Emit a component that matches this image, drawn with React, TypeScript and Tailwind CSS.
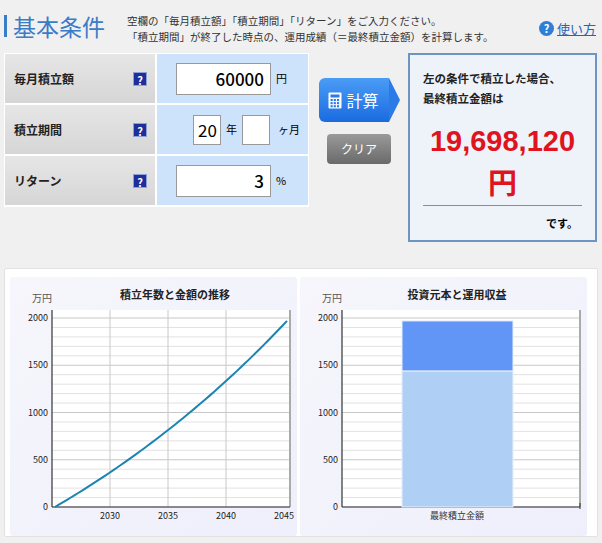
import React from 'react';

const font = { fontFamily: '"Noto Sans CJK JP", "Noto Sans", sans-serif' };
const yv = (v: number) => 230 - v * 0.0945;

const Grid = ({ vlines }: { vlines: number[] }) => (
  <>
    <rect x={42} y={33} width={238} height={197} fill="#fff" />
    {Array.from({ length: 21 }, (_, i) => i * 100).map((v) => (
      <line key={v} x1={42} x2={280} y1={yv(v)} y2={yv(v)} stroke={v % 500 === 0 ? '#c8c8c8' : '#e2e2e2'} strokeWidth={v % 500 === 0 ? 1.2 : 1} />
    ))}
    {vlines.map((x) => (
      <line key={x} x1={x} x2={x} y1={33} y2={230} stroke="#c8c8c8" />
    ))}
    <line x1={280} x2={280} y1={33} y2={230} stroke="#aaa" strokeWidth={2} />
    <line x1={42} x2={42} y1={33} y2={230} stroke="#333" strokeWidth={1.2} />
    <line x1={42} x2={280} y1={230} y2={230} stroke="#333" strokeWidth={1.2} />
    {[0, 500, 1000, 1500, 2000].map((v) => (
      <text key={v} x={38} y={yv(v) + 3} fontSize={9} textAnchor="end" fill="#222">{v}</text>
    ))}
    <text x={22} y={25} fontSize={10} fill="#555">万円</text>
  </>
);

const LineChart = () => {
  const pts: string[] = [];
  const r = 0.03 / 12;
  for (let m = 0; m <= 240; m += 4) {
    const v = (60000 * (Math.pow(1 + r, m) - 1)) / r / 10000;
    pts.push(`${45 + (m / 12) * 11.6},${yv(v)}`);
  }
  return (
    <svg width={287} height={251} style={font}>
      <Grid vlines={[100, 158, 216]} />
      <text x={165} y={22} fontSize={11} fontWeight={700} textAnchor="middle" fill="#222">積立年数と金額の推移</text>
      <polyline points={pts.join(' ')} fill="none" stroke="#1c84b0" strokeWidth={2} />
      {[['2030', 100], ['2035', 158], ['2040', 216], ['2045', 274]].map(([t, x]) => (
        <text key={t} x={x as number} y={242} fontSize={9} textAnchor="middle" fill="#222">{t}</text>
      ))}
    </svg>
  );
};

const BarChart = () => (
  <svg width={287} height={251} style={font}>
    <Grid vlines={[]} />
    <text x={157} y={22} fontSize={11} fontWeight={700} textAnchor="middle" fill="#222">投資元本と運用収益</text>
    <rect x={102} y={yv(1440)} width={111} height={230 - yv(1440)} fill="#afd0f4" stroke="#e8f0fb" />
    <rect x={102} y={yv(1969)} width={111} height={yv(1440) - yv(1969)} fill="#6196f7" stroke="#e8f0fb" />
    <line x1={280} x2={280} y1={226} y2={232} stroke="#333" />
    <text x={157} y={242} fontSize={9} textAnchor="middle" fill="#333">最終積立金額</text>
  </svg>
);

const Help = () => (
  <span className="w-[14px] h-[14px] bg-[#1f2f9a] text-white text-[11px] font-bold leading-[14px] text-center border border-[#8ea0d8]">?</span>
);

const rows = ['毎月積立額', '積立期間', 'リターン'];

export default function App() {
  return (
    <div className="w-[602px] h-[543px] bg-[#f0f0f0] relative overflow-hidden" style={font}>
      <div className="flex items-start pt-[12px] pl-[4px] pr-[6px] h-[53px]">
        <div className="flex items-center mt-[1px]">
          <div className="w-[3px] h-[22px] bg-[#3a7cc7]" />
          <span className="ml-[6px] text-[23px] leading-[26px] text-[#3a7cc7]">基本条件</span>
        </div>
        <div className="ml-[22px] text-[10.5px] leading-[16px] text-[#333] pt-[1px]">
          <div>空欄の「毎月積立額」「積立期間」「リターン」をご入力ください。</div>
          <div>「積立期間」が終了した時点の、運用成績（＝最終積立金額）を計算します。</div>
        </div>
        <div className="ml-auto flex items-center gap-[3px] mt-[7px]">
          <span className="w-[15px] h-[15px] rounded-full bg-[#2f7fd4] text-white text-[11px] font-bold leading-[15px] text-center">?</span>
          <span className="text-[13px] text-[#2a63b5] underline">使い方</span>
        </div>
      </div>

      <div className="flex">
        <div className="ml-[4px] w-[305px] border border-white bg-white flex flex-col gap-[2px] h-[154px]">
          {rows.map((r, i) => (
            <div key={r} className="flex h-[49px] gap-[2px]">
              <div className="w-[150px] bg-gradient-to-b from-[#e6e6e6] to-[#d6d6d6] flex items-center justify-between pl-[9px] pr-[8px]">
                <span className="text-[12px] font-bold text-[#222]">{r}</span>
                <Help />
              </div>
              <div className="flex-1 bg-[#cde3fb] flex items-center pl-[19px] gap-[5px]">
                {i === 1 ? (
                  <div className="flex items-center gap-[5px] pl-[17px]">
                    <div className="w-[28px] h-[30px] bg-white border border-[#999] text-[17px] leading-[28px] pl-[4px] overflow-hidden">20</div>
                    <span className="text-[11px]">年</span>
                    <div className="w-[28px] h-[30px] bg-white border border-[#999]" />
                    <span className="text-[11px] ml-[3px]">ヶ月</span>
                  </div>
                ) : (
                  <>
                    <div className="w-[95px] h-[32px] bg-white border border-[#999] text-[17px] leading-[30px] text-right pr-[6px] font-medium">{i === 0 ? '60000' : '3'}</div>
                    <span className="text-[11px]">{i === 0 ? '円' : '%'}</span>
                  </>
                )}
              </div>
            </div>
          ))}
        </div>

        <div className="w-[100px] flex flex-col items-center pt-[25px]">
          <div className="flex items-center">
            <div className="w-[70px] h-[44px] bg-gradient-to-b from-[#4a9cf5] to-[#1a6be0] rounded-l-[6px] flex items-center justify-center gap-[4px] text-white text-[16px]">
              <svg width="14" height="17" viewBox="0 0 14 17">
                <rect x="0.5" y="0.5" width="13" height="16" rx="1" fill="#fff" />
                <rect x="2.5" y="2.5" width="9" height="3" fill="#2a7be8" />
                {[0, 1, 2].map((r) => [0, 1, 2].map((c) => (
                  <rect key={`${r}${c}`} x={2.5 + c * 3.2} y={7 + r * 3.1} width="2.2" height="2.1" fill="#2a7be8" />
                )))}
              </svg>
              計算
            </div>
            <div className="w-0 h-0 border-y-[22px] border-y-transparent border-l-[11px] border-l-[#2a7be8]" />
          </div>
          <div className="mt-[12px] w-[64px] h-[30px] rounded-[4px] bg-gradient-to-b from-[#9a9a9a] to-[#6a6a6a] text-white text-[12px] flex items-center justify-center">クリア</div>
        </div>

        <div className="ml-[-1px] w-[189px] h-[189px] border-2 border-[#6e94c4] bg-[#eef3fa] px-[13px] pt-[13px]">
          <div className="text-[11.5px] font-bold leading-[20px] text-[#222]">左の条件で積立した場合、<br />最終積立金額は</div>
          <div className="text-center text-[#e0141e] text-[29px] font-bold leading-[40px] mt-[10px]">
            <span style={{ fontFamily: '"Liberation Sans", Arial, sans-serif' }}>19,698,120</span><br />円
          </div>
          <div className="border-t border-[#6e94c4] mt-[4px] pt-[9px] text-right text-[11px] font-bold pr-[4px]">です。</div>
        </div>
      </div>

      <div className="absolute left-[4px] top-[268px] w-[594px] h-[269px] bg-white border border-[#e2e2e2] rounded-[2px] flex gap-[3px] pl-[5px] pt-[8px]">
        <div className="bg-gradient-to-br from-[#f6f6fb] to-[#eeeffb] rounded-[3px]"><LineChart /></div>
        <div className="bg-gradient-to-br from-[#f6f6fb] to-[#eeeffb] rounded-[3px]"><BarChart /></div>
      </div>
    </div>
  );
}
